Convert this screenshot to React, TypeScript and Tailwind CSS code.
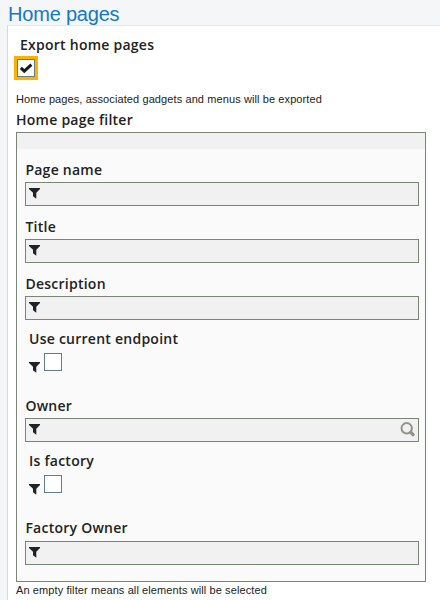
import React from "react";

const Funnel = ({ className = "" }: { className?: string }) => (
  <svg className={"block h-[11px] w-[11px] shrink-0 " + className} viewBox="0 0 11 11" fill="#1f2326">
    <path d="M0 0H11V1L7.3 4.8V10.8L4 8.2V4.8L0 1Z" />
  </svg>
);

const Label = ({ children, className = "" }: { children: React.ReactNode; className?: string }) => (
  <div
    className={
      "h-5 whitespace-nowrap font-['Open_Sans',sans-serif] text-[14px] leading-5 font-semibold tracking-[0.25px] text-[#222222] " +
      className
    }
  >
    {children}
  </div>
);

const Field = ({ label, search = false, gap = "mt-0.5" }: { label: string; search?: boolean; gap?: string }) => (
  <div>
    <Label className="pl-[0.4px]">{label}</Label>
    <div
      className={
        "flex h-6 justify-between border border-[#7a8578] bg-[#f1f1f1] pt-[5px] pr-[3px] pl-[3px] " + gap
      }
    >
      <Funnel />
      {search && (
        <svg className="-mt-0.5 block h-[15px] w-[15px]" viewBox="0 0 15 15" fill="none" stroke="#91948d">
          <circle cx="6.7" cy="6.3" r="5.2" strokeWidth="2" />
          <path d="M10.8 10.4L13 12.6" strokeWidth="3.4" strokeLinecap="round" />
        </svg>
      )}
    </div>
  </div>
);

const CheckField = ({ label }: { label: string }) => (
  <div className="pl-1">
    <Label>{label}</Label>
    <div className="mt-1 flex h-5">
      <Funnel className="mt-[9px]" />
      <div className="ml-1 h-[18px] w-[18px] border border-[#5f7f8c] bg-white" />
    </div>
  </div>
);

const note =
  "h-3.5 whitespace-nowrap font-['Liberation_Sans',Arial,sans-serif] text-[11px] leading-[14px] tracking-[0.1px] text-[#222222]";

export default function App() {
  return (
    <div className="h-[600px] w-[440px] overflow-hidden bg-[#f5f6f8] pl-[7px]">
      <h1 className="h-[25px] pl-px font-['Liberation_Sans',Arial,sans-serif] text-[20px] leading-[28px] tracking-[-0.2px] text-[#1478c8]">
        Home pages
      </h1>
      <main className="h-[575px] border-t border-l border-t-[#e6e8ea] border-l-[#d9d9d9] bg-white pl-2">
        <Label className="mt-[9px] ml-1">Export home pages</Label>
        <div className="mt-px -ml-0.5 h-6 w-6 bg-[#ffb000] p-[3px]">
          <div className="h-[18px] w-[18px] border border-[#5f7f8c] bg-white">
            <svg className="block h-4 w-4" viewBox="0 0 16 16" fill="none" stroke="#1b1b1b" strokeWidth="3">
              <path d="M2.8 7.8L6.3 11.2L13.4 4.6" />
            </svg>
          </div>
        </div>
        <p className={note + " mt-[12px]"}>Home pages, associated gadgets and menus will be exported</p>
        <Label className="mt-[4px]">Home page filter</Label>
        <section className="mt-[2px] h-[450px] w-[410px] border border-[#7a8578] bg-[#fafafa]">
          <div className="h-4 bg-[#f1f1f1]" />
          <div className="flex flex-col pt-[11px] pr-[6px] pl-2">
            <Field label="Page name" />
            <div className="mt-[11px]">
              <Field label="Title" />
            </div>
            <div className="mt-[11px]">
              <Field label="Description" />
            </div>
            <div className="mt-[9px]">
              <CheckField label="Use current endpoint" />
            </div>
            <div className="mt-[23px]">
              <Field label="Owner" search />
            </div>
            <div className="mt-[9px]">
              <CheckField label="Is factory" />
            </div>
            <div className="mt-[23px]">
              <Field label="Factory Owner" gap="mt-[3px]" />
            </div>
          </div>
        </section>
        <p className={note + " mt-px"}>An empty filter means all elements will be selected</p>
      </main>
    </div>
  );
}
